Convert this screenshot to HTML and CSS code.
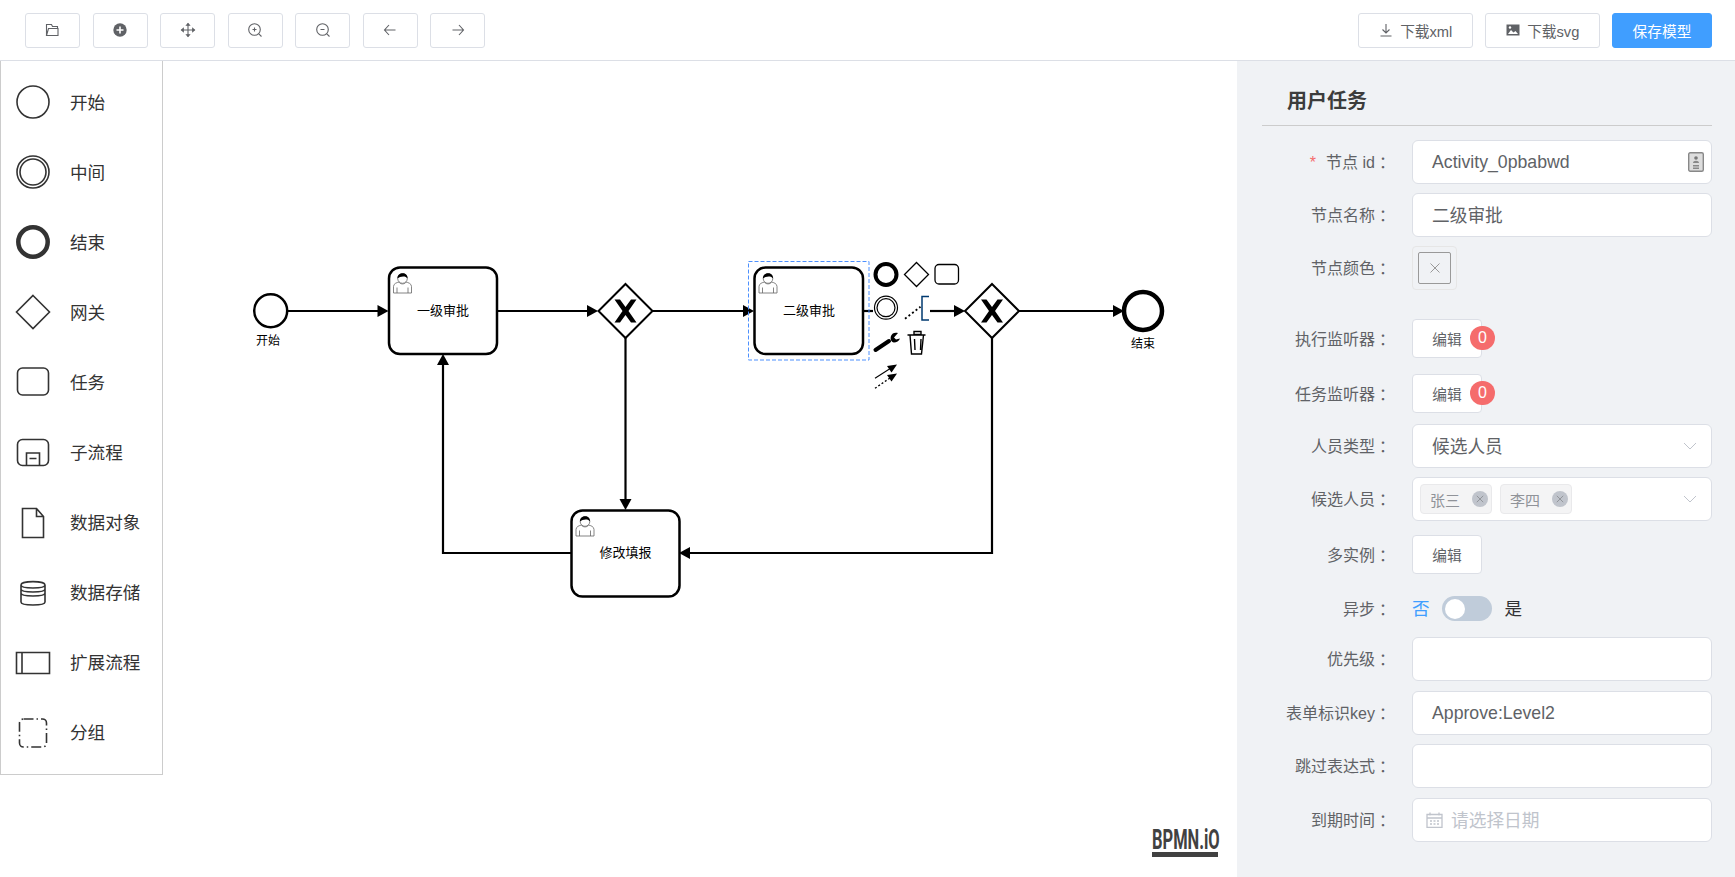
FILE: index.html
```html
<!DOCTYPE html>
<html lang="zh-CN">
<head>
    <meta charset="UTF-8">
    <meta name="viewport" content="width=device-width, initial-scale=1.0">
    <title>流程设计器</title>
    <link rel="stylesheet" href="styles.css">
</head>
<body>
    <!-- Top toolbar -->
    <header class="toolbar">
        <div class="tool-group">
            <button class="tool-btn"><svg class="tool-icon" viewBox="0 0 16 16"><path d="M1.500 13.500V2.500h5l1 2h5v2M1.500 13.500h11.500V6.500H3.500l-2 7z"/></svg></button>
            <button class="tool-btn"><svg class="tool-icon" viewBox="0 0 16 16"><circle cx="8" cy="8" r="6.700" fill="#606266" stroke="none"/><path d="M8 4.500v7M4.500 8h7" stroke="#fff" stroke-width="1.600"/></svg></button>
            <button class="tool-btn"><svg class="tool-icon" viewBox="0 0 16 16"><path d="M8 1.500v13M1.500 8h13"/><path d="M6.500 3.300L8 1.500l1.500 1.800zM6.500 12.700L8 14.500l1.500-1.800zM3.300 6.500L1.500 8l1.800 1.500zM12.700 6.500L14.500 8l-1.800 1.500z" fill="#606266"/></svg></button>
            <button class="tool-btn"><svg class="tool-icon" viewBox="0 0 16 16"><circle cx="7.500" cy="7.500" r="5.800"/><path d="M11.800 11.800l2.700 2.700M7.500 5.500v4M5.500 7.500h4"/></svg></button>
            <button class="tool-btn"><svg class="tool-icon" viewBox="0 0 16 16"><circle cx="7.500" cy="7.500" r="5.800"/><path d="M11.800 11.800l2.700 2.700M5.500 7.500h4"/></svg></button>
            <button class="tool-btn"><svg class="tool-icon" viewBox="0 0 16 16"><path d="M13.500 8H2.500M7 3L2.500 8 7 13"/></svg></button>
            <button class="tool-btn"><svg class="tool-icon" viewBox="0 0 16 16"><path d="M2.500 8h11M9 3l4.500 5L9 13"/></svg></button>
        </div>
        <div class="tool-group">
            <button class="text-btn"><svg class="tool-icon" viewBox="0 0 16 16"><path d="M8 2v8.500M4.500 7.500L8 11l3.500-3.500M2.500 14h11"/></svg>下载xml</button>
            <button class="text-btn"><svg class="tool-icon" viewBox="0 0 16 16"><path d="M1.500 2.500h13v11h-13z" fill="#606266" stroke="none"/><path d="M3 12l3-4 2.500 2.500 2-1.500 2.500 3z" fill="#fff" stroke="none"/><circle cx="5" cy="5.500" r="1.200" fill="#fff" stroke="none"/></svg>下载svg</button>
            <button class="text-btn primary">保存模型</button>
        </div>
    </header>

    <main class="workspace">
        <section class="canvas">
            <!-- Element palette -->
            <nav class="palette">
                <div class="palette-item"><svg class="palette-icon" viewBox="0 0 36 36"><circle cx="18" cy="18" r="16"/></svg><span>开始</span></div>
                <div class="palette-item"><svg class="palette-icon" viewBox="0 0 36 36"><circle cx="18" cy="18" r="16"/><circle cx="18" cy="18" r="13"/></svg><span>中间</span></div>
                <div class="palette-item"><svg class="palette-icon" viewBox="0 0 36 36"><circle cx="18" cy="18" r="14.700" stroke-width="4.500"/></svg><span>结束</span></div>
                <div class="palette-item"><svg class="palette-icon" viewBox="0 0 36 36"><path d="M18 1.500L34.500 18 18 34.500 1.500 18z"/></svg><span>网关</span></div>
                <div class="palette-item"><svg class="palette-icon" viewBox="0 0 36 36"><rect x="2.500" y="4" width="31" height="27" rx="5"/></svg><span>任务</span></div>
                <div class="palette-item"><svg class="palette-icon" viewBox="0 0 36 36"><rect x="2.500" y="4.500" width="31" height="26" rx="5"/><path d="M11.500 30.500V18h13v12.500M14.500 23.500h7"/></svg><span>子流程</span></div>
                <div class="palette-item"><svg class="palette-icon" viewBox="0 0 36 36"><path d="M7.500 3.500h14l7 8v21h-21zM21.500 3.500v8h7"/></svg><span>数据对象</span></div>
                <div class="palette-item"><svg class="palette-icon" viewBox="0 0 36 36"><path d="M6 10c0-4.500 24-4.500 24 0v17c0 4-24 4-24 0zM6 10c0 4 24 4 24 0M6 14c0 4 24 4 24 0M6 18c0 4 24 4 24 0"/></svg><span>数据存储</span></div>
                <div class="palette-item"><svg class="palette-icon" viewBox="0 0 36 36"><path d="M1.500 7.500h33v21h-33zM7 7.500v21"/></svg><span>扩展流程</span></div>
                <div class="palette-item"><svg class="palette-icon" viewBox="0 0 36 36"><rect x="4.500" y="4" width="27" height="28" rx="4" stroke-dasharray="10 3 1.500 3"/></svg><span>分组</span></div>
            </nav>

            <!-- Diagram, coordinates are page pixels -->
            <svg class="diagram" viewBox="0 61 1237 816">
                <defs>
                    <g id="user-icon">
                        <path d="M.5 21.500V15c0-3 3.500-4 5.500-4.500 1 2.500 6 2.500 7 0 2 .5 5.500 1.500 5.500 4.500v6.500zM4 21.500V16M15 21.500V16" fill="#fff" stroke="#666" stroke-width=".8"/>
                        <circle cx="9.500" cy="7" r="4.800" fill="#fff" stroke="#666" stroke-width=".8"/>
                        <path d="M4.500 7C4 .5 15-.5 14.500 7 13 4 7 4.500 4.500 7z" fill="#000"/>
                    </g>
                    <path id="gateway-x" d="M-11-11.500h5.500l5.500 7.500 5.500-7.500h5.500l-8 11.500 8 11.500h-5.500l-5.500-7.500-5.500 7.500h-5.500l8-11.500z"/>
                </defs>

                <!-- Flows -->
                <g class="flow">
                    <path d="M287 311H380"/>
                    <path d="M497 311H590"/>
                    <path d="M652 311H746"/>
                    <path d="M863 311H873"/>
                    <path d="M930 311H957"/>
                    <path d="M1019 311H1116"/>
                    <path d="M625.500 338V502"/>
                    <path d="M992 338V553H687"/>
                    <path d="M571 553H443V362"/>
                </g>
                <g class="arrow">
                    <path d="M388.500 311l-11-6v12z"/>
                    <path d="M598 311l-11-6v12z"/>
                    <path d="M754 311l-11-6v12z"/>
                    <path d="M965 311l-11-6v12z"/>
                    <path d="M1124 311l-11-6v12z"/>
                    <path d="M625.500 510l-6-11h12z"/>
                    <path d="M679 553l11-6v12z"/>
                    <path d="M443 354l-6 11h12z"/>
                </g>

                <!-- Events -->
                <circle class="shape" cx="270.700" cy="310.700" r="16.500"/>
                <text class="small-label" x="268" y="342">开始</text>
                <circle class="shape end" cx="1143" cy="311" r="19"/>
                <text class="small-label" x="1143" y="345">结束</text>

                <!-- Tasks -->
                <rect class="shape" x="389" y="267.500" width="108" height="86.500" rx="11"/>
                <use href="#user-icon" x="393" y="271.500"/>
                <text class="task-label" x="443" y="312">一级审批</text>

                <rect class="shape" x="754.500" y="267.500" width="108.500" height="86.500" rx="11"/>
                <use href="#user-icon" x="758.500" y="271.500"/>
                <text class="task-label" x="809" y="312">二级审批</text>

                <rect class="shape" x="571.500" y="510.500" width="108" height="86" rx="11"/>
                <use href="#user-icon" x="575.500" y="514.500"/>
                <text class="task-label" x="625.500" y="553.500">修改填报</text>

                <!-- Gateways -->
                <path class="shape thin" d="M625.500 284l27 27-27 27-27-27z"/>
                <use href="#gateway-x" x="625.500" y="311"/>
                <path class="shape thin" d="M992 284l27 27-27 27-27-27z"/>
                <use href="#gateway-x" x="992" y="311"/>

                <!-- Selection outline -->
                <rect class="selection" x="748.500" y="261.500" width="120.500" height="98.500"/>

                <!-- Context pad -->
                <g class="pad">
                    <circle cx="886" cy="274.500" r="10.500" stroke-width="4"/>
                    <path d="M916.500 262.500l12 12-12 12-12-12z" stroke-width="1.300"/>
                    <rect x="935" y="264.500" width="23.500" height="19.500" rx="4" stroke-width="1.300"/>
                    <circle cx="886" cy="307.700" r="11.500" stroke-width="1.200"/>
                    <circle cx="886" cy="307.700" r="9" stroke-width="1.200"/>
                    <path d="M905 318.700L920.500 306.700" stroke-width="1.800" stroke-dasharray="2 2.500" fill="none"/>
                    <path d="M929 296.500h-7v23.500h7" stroke="#003a70" stroke-width="1.500" fill="none"/>
                    <path d="M875.500 350L889 341" stroke-width="4" stroke-linecap="round" fill="none"/>
                    <path d="M898 333c-3-1-6 0-7 3s0 6 3 6.500c2.500 0 5-1.500 6-4l-4 1-2-2z" fill="#000" stroke="none"/>
                    <path d="M907.500 335h18M910 335l1.500 19h10l2-19M914 331.500h7v3h-7zM914.500 339l.5 11M921 339l-.5 11" stroke-width="1.400" fill="none"/>
                    <path d="M875 378.300L891 368" stroke-width="1.100" fill="none"/>
                    <path d="M897 364.500l-10 1.500 4.500 6.500z" fill="#000" stroke="none"/>
                    <path d="M875 388.300L890 378" stroke-width="1.300" stroke-dasharray="2 2" fill="none"/>
                    <path d="M897 373.500l-10 1.500 4.500 6.500z" fill="#000" stroke="none"/>
                </g>
            </svg>

            <div class="logo"><span class="logo-text">BPMN.iO</span></div>
        </section>

        <!-- Property panel -->
        <aside class="panel">
            <h3 class="panel-title">用户任务</h3>

            <div class="form-row gap-9">
                <label class="form-label"><span class="required">*</span>节点 id<span class="colon">：</span></label>
                <div class="form-input">Activity_0pbabwd
                    <svg class="card-icon" viewBox="0 0 16 20"><rect x=".7" y=".7" width="14.600" height="18.600" rx="1.500" fill="#ddd" stroke="#888" stroke-width="1.400"/><circle cx="8" cy="6" r="1.800" fill="#777"/><path d="M5 11c0-3 6-3 6 0zM5 13h6v1.500H5zM5 15.500h6V17H5z" fill="#888"/></svg>
                </div>
            </div>
            <div class="form-row gap-9">
                <label class="form-label">节点名称<span class="colon">：</span></label>
                <div class="form-input"><span class="cjk">二级审批</span></div>
            </div>
            <div class="form-row gap-29">
                <label class="form-label">节点颜色<span class="colon">：</span></label>
                <div class="color-picker"><div class="color-box"><svg class="color-x" viewBox="0 0 10 10"><path d="M.5.500l9 9M9.500.500l-9 9"/></svg></div></div>
            </div>
            <div class="form-row short gap-16">
                <label class="form-label">执行监听器<span class="colon">：</span></label>
                <button class="edit-btn">编辑<span class="badge">0</span></button>
            </div>
            <div class="form-row short gap-11">
                <label class="form-label">任务监听器<span class="colon">：</span></label>
                <button class="edit-btn">编辑<span class="badge">0</span></button>
            </div>
            <div class="form-row gap-9">
                <label class="form-label">人员类型<span class="colon">：</span></label>
                <div class="form-input"><span class="cjk">候选人员</span>
                    <svg class="chevron" viewBox="0 0 14 8"><path d="M1 1l6 6 6-6"/></svg>
                </div>
            </div>
            <div class="form-row gap-14">
                <label class="form-label">候选人员<span class="colon">：</span></label>
                <div class="form-input tags">
                    <span class="tag">张三<span class="tag-close"><svg viewBox="0 0 10 10"><path d="M1 1l8 8M9 1l-8 8"/></svg></span></span>
                    <span class="tag">李四<span class="tag-close"><svg viewBox="0 0 10 10"><path d="M1 1l8 8M9 1l-8 8"/></svg></span></span>
                    <svg class="chevron" viewBox="0 0 14 8"><path d="M1 1l6 6 6-6"/></svg>
                </div>
            </div>
            <div class="form-row short gap-22">
                <label class="form-label">多实例<span class="colon">：</span></label>
                <button class="edit-btn">编辑</button>
            </div>
            <div class="form-row switch-row gap-16">
                <label class="form-label">异步<span class="colon">：</span></label>
                <span class="switch-text active">否</span>
                <span class="switch"><span class="knob"></span></span>
                <span class="switch-text">是</span>
            </div>
            <div class="form-row gap-10">
                <label class="form-label">优先级<span class="colon">：</span></label>
                <div class="form-input"></div>
            </div>
            <div class="form-row gap-9">
                <label class="form-label">表单标识key<span class="colon">：</span></label>
                <div class="form-input">Approve:Level2</div>
            </div>
            <div class="form-row gap-10">
                <label class="form-label">跳过表达式<span class="colon">：</span></label>
                <div class="form-input"></div>
            </div>
            <div class="form-row">
                <label class="form-label">到期时间<span class="colon">：</span></label>
                <div class="form-input date">
                    <svg class="date-icon" viewBox="0 0 17 16"><path d="M1 2.500h15v13H1zM1 6h15M4 .500v3M13 .500v3"/><path d="M4 9h2M7.500 9h2M11 9h2M4 12h2M7.500 12h2M11 12h2"/></svg>
                    <span class="placeholder cjk">请选择日期</span>
                </div>
            </div>
        </aside>
    </main>
</body>
</html>
```

FILE: styles.css
```css
/* General page styles */
* {
    box-sizing: border-box;
}

body {
    margin: 0;
    height: 100vh;
    display: flex;
    flex-direction: column;
    overflow: hidden;
    background: #fff;
    color: #606266;
    font-family: "Liberation Sans", "Noto Sans CJK SC", sans-serif;
}

button {
    font-family: inherit;
    cursor: pointer;
}

/* Top toolbar */
.toolbar {
    height: 61px;
    flex: none;
    display: flex;
    justify-content: space-between;
    padding: 13px 23px 0 25px;
    border-bottom: 1px solid #dcdfe6;
}

.tool-group {
    display: flex;
    gap: 12.5px;
    height: 35px;
}

.tool-btn,
.text-btn {
    display: flex;
    align-items: center;
    justify-content: center;
    height: 35px;
    padding: 0 0 1px;
    background: #fff;
    border: 1px solid #dcdfe6;
    border-radius: 3px;
    color: #606266;
}

.tool-btn {
    width: 55px;
}

.text-btn {
    width: 114.5px;
    font-size: 14.7px;
}

.text-btn.primary {
    width: 100px;
    background: #409eff;
    border-color: #409eff;
    color: #fff;
}

.tool-icon {
    width: 16px;
    height: 16px;
    fill: none;
    stroke: #606266;
    stroke-width: 1.1;
}

.text-btn .tool-icon {
    margin-right: 6px;
}

/* Main area */
.workspace {
    flex: 1;
    display: flex;
    min-height: 0;
}

.canvas {
    position: relative;
    flex: 1;
}

.diagram {
    display: block;
    width: 100%;
    height: 100%;
}

/* Palette floats over the canvas */
.palette {
    position: absolute;
    top: 0;
    left: 0;
    width: 163px;
    height: 714px;
    padding: 6px 0 0 14px;
    background: #fff;
    border: 1px solid #ccc;
    border-top: none;
}

.palette-item {
    display: flex;
    align-items: center;
    gap: 19px;
    height: 70.1px;
    font-size: 17.6px;
    color: #333;
}

.palette-item span {
    padding-bottom: 2px;
}

.palette-icon {
    width: 36px;
    height: 36px;
    flex: none;
    fill: none;
    stroke: #333;
    stroke-width: 1.6;
}

/* Diagram shapes */
.flow path {
    fill: none;
    stroke: #000;
    stroke-width: 2.2;
}

.arrow path {
    fill: #000;
}

.shape {
    fill: #fff;
    stroke: #000;
    stroke-width: 2.5;
}

.shape.thin {
    stroke-width: 2;
}

.shape.end {
    stroke-width: 4.5;
}

.small-label,
.task-label {
    text-anchor: middle;
    fill: #000;
    font-weight: 400;
}

.small-label {
    font-size: 12px;
    dominant-baseline: middle;
}

.task-label {
    font-size: 13px;
    dominant-baseline: middle;
}

.selection {
    fill: none;
    stroke: #4d90fe;
    stroke-width: 1;
    stroke-dasharray: 4 2;
}

.pad {
    stroke: #000;
    fill: #fff;
}

/* Watermark in the canvas corner */
.logo {
    position: absolute;
    right: 19px;
    bottom: 20px;
    width: 66px;
    height: 29px;
    border-bottom: 5px solid #414141;
    color: #414141;
}

.logo-text {
    display: block;
    font-family: "Roboto", "Liberation Sans", sans-serif;
    font-size: 27px;
    font-weight: 700;
    line-height: 24px;
    white-space: nowrap;
    transform: scaleX(0.61);
    transform-origin: left center;
}

/* Property panel */
.panel {
    width: 498px;
    flex: none;
    padding: 0 23px 0 25px;
    background: #f0f2f5;
}

.panel-title {
    margin: 0 0 14px;
    height: 65px;
    padding: 28px 0 0 25px;
    font-size: 20px;
    line-height: 24px;
    font-weight: 700;
    color: #3c3c3c;
    border-bottom: 1px solid #ccc;
}

.form-row {
    display: flex;
    align-items: center;
    height: 44px;
}

.form-row.short {
    height: 39px;
}

.form-row.switch-row {
    height: 25px;
}

.gap-9 { margin-bottom: 9px; }
.gap-10 { margin-bottom: 10px; }
.gap-11 { margin-bottom: 11px; }
.gap-14 { margin-bottom: 14px; }
.gap-16 { margin-bottom: 16px; }
.gap-22 { margin-bottom: 22px; }
.gap-29 { margin-bottom: 29px; }

.form-label {
    width: 150px;
    flex: none;
    padding: 0 20px 2px 0;
    text-align: right;
    font-size: 16px;
    color: #606266;
}

/* Traditional Chinese face keeps the full-width colon centred */
.colon {
    padding-left: 4px;
    margin-right: -3px;
    font-family: "Noto Sans CJK TC", sans-serif;
}

.required {
    margin-right: 10px;
    color: #f56c6c;
}

.form-input {
    display: flex;
    align-items: center;
    justify-content: space-between;
    flex: 1;
    height: 44px;
    padding: 0 14px 0 19px;
    background: #fff;
    border: 1px solid #dcdfe6;
    border-radius: 6px;
    font-size: 17.7px;
    color: #606266;
}

.cjk {
    padding-bottom: 2px;
}

.card-icon {
    width: 16px;
    height: 20px;
    margin-right: -7px;
}

.chevron {
    width: 14px;
    height: 8px;
    fill: none;
    stroke: #c0c4cc;
    stroke-width: 1;
}

/* Colour picker */
.color-picker {
    width: 45px;
    height: 44px;
    padding: 5px;
    border: 1px solid #e6e6e6;
    border-radius: 4px;
}

.color-box {
    display: flex;
    align-items: center;
    justify-content: center;
    width: 33px;
    height: 32px;
    border: 1px solid #999;
    border-radius: 2px;
}

.color-x {
    width: 10px;
    height: 10px;
    fill: none;
    stroke: #999;
}

/* Edit buttons and their counters */
.edit-btn {
    position: relative;
    width: 70px;
    height: 39px;
    padding: 0;
    background: #fff;
    border: 1px solid #dcdfe6;
    border-radius: 4px;
    font-size: 14.7px;
    color: #606266;
}

.badge {
    position: absolute;
    top: 6px;
    left: 57px;
    width: 25px;
    height: 24px;
    border-radius: 12px;
    background: #f56c6c;
    color: #fff;
    font-size: 16px;
    line-height: 24px;
    text-align: center;
}

/* Select tags */
.form-input.tags {
    justify-content: flex-start;
    gap: 8px;
    padding-left: 7px;
}

.tags .chevron {
    margin-left: auto;
}

.tag {
    display: flex;
    align-items: center;
    justify-content: space-between;
    width: 72px;
    height: 30px;
    padding: 0 3px 0 9px;
    background: #f4f4f5;
    border: 1px solid #e9e9eb;
    border-radius: 4px;
    font-size: 15px;
    color: #909399;
}

.tag-close {
    display: flex;
    align-items: center;
    justify-content: center;
    width: 16px;
    height: 16px;
    border-radius: 50%;
    background: #c0c4cc;
}

.tag-close svg {
    width: 8px;
    height: 8px;
    fill: none;
    stroke: #909399;
    stroke-width: 1.2;
}

/* Switch */
.switch-text {
    padding-bottom: 2px;
    font-size: 17.6px;
    color: #303133;
}

.switch-text.active {
    color: #409eff;
}

.switch {
    width: 50px;
    height: 25px;
    margin: 0 12.5px;
    padding: 2.5px 3px;
    border-radius: 13px;
    background: #c0ccda;
}

.knob {
    display: block;
    width: 20px;
    height: 20px;
    border-radius: 50%;
    background: #fff;
}

/* Date input */
.form-input.date {
    justify-content: flex-start;
    padding-left: 13px;
    gap: 8px;
}

.date-icon {
    width: 17px;
    height: 16px;
    fill: none;
    stroke: #c0c4cc;
    stroke-width: 1.3;
}

.placeholder {
    color: #c0c4cc;
}
```
